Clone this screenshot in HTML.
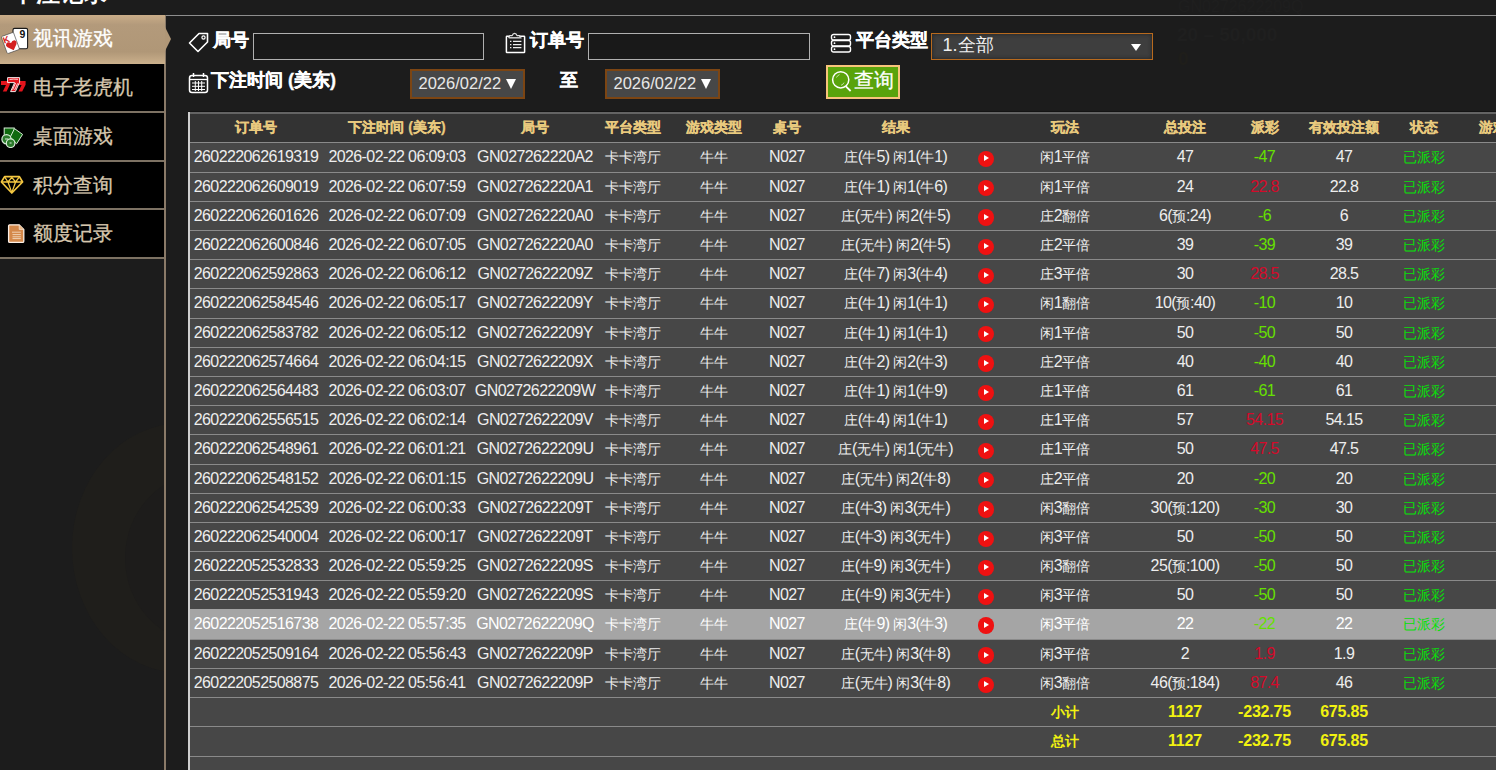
<!DOCTYPE html>
<html><head><meta charset="utf-8">
<style>
html,body{margin:0;padding:0;}
body{width:1496px;height:770px;overflow:hidden;background:#1c1c1c;position:relative;font-family:"Liberation Sans",sans-serif;color:#fff;}
.title{position:absolute;left:11.5px;top:-23px;font-size:24px;font-weight:bold;color:#fff;letter-spacing:0px;}
.topline{position:absolute;left:165px;right:0;top:15px;height:1px;background:#8e8e8e;}
.side{position:absolute;left:0;top:15px;width:165px;}
.vline{position:absolute;left:164px;top:15px;width:1.5px;height:770px;background:#8a7a68;}
.it{position:absolute;left:0;width:164px;height:48px;background:#000;}
.it span{position:absolute;left:33px;top:11px;font-size:20px;color:#d6c7ae;line-height:24px;-webkit-text-stroke:0.3px #d6c7ae;}
.sep{position:absolute;left:0;width:164px;height:2px;background:#7d7263;}
.sel{position:absolute;left:0;top:15px;width:165px;height:49px;background:linear-gradient(to bottom,#c9ac88 0%,#b39a7b 20%,#b09777 75%,#cbb08c 100%);}
.sel:after{content:"";position:absolute;left:165px;top:12px;border-left:6px solid #b09777;border-top:12.5px solid transparent;border-bottom:12.5px solid transparent;}
.sel span{position:absolute;left:33px;top:11px;font-size:20px;color:#fff;line-height:24px;-webkit-text-stroke:0.3px #fff;}
.lab{position:absolute;font-size:18px;font-weight:bold;color:#fff;line-height:20px;-webkit-text-stroke:0.35px #fff;}
.inp{position:absolute;box-sizing:border-box;border:1.5px solid #b0b0b0;background:#191919;}
.sel2{position:absolute;box-sizing:border-box;border:1.5px solid #b86a1e;background:#3e3e3e;box-shadow:inset 0 0 4px #222;}
.date{position:absolute;box-sizing:border-box;border:2.5px solid #7c4513;background:#474747;font-size:16px;color:#e8e8e8;line-height:24px;}
.btn{position:absolute;box-sizing:border-box;border:2px solid #f8c47a;background:#59a30b;}
.tbl{position:absolute;left:188px;top:113px;width:1400px;height:700px;background:#474747;}
.lb{position:absolute;left:188px;top:112px;width:2px;height:700px;background:#cfcfcf;z-index:3;}
.hd{position:absolute;left:188px;width:1400px;height:30.4px;background:#333;border-top:2px solid #646464;box-sizing:border-box;box-shadow:0 -1px 0 #141414;}
.r{position:absolute;left:188px;width:1400px;height:29.2px;border-top:1px solid #8a8a8a;box-sizing:border-box;}
.r.hl .c{color:#fff;}
.r.hl .neg{color:#66e000;}
.r.hl .stc{color:#08e008;}
.r.hl{background:#a5a5a5;border-top-color:#a5a5a5;height:30.3px;z-index:2;}
.c{position:absolute;width:200px;text-align:center;font-style:normal;white-space:nowrap;}
.hd .c{top:4px;font-size:14px;font-weight:bold;color:#e9ca7e;line-height:18px;-webkit-text-stroke:0.25px #e9ca7e;}
.r .c{top:5px;font-size:16px;letter-spacing:-0.6px;color:#eee;line-height:18px;}
.c em{font-style:normal;}
.r em{font-size:14px;letter-spacing:0;}
.r .neg{color:#66e000;}
.r .pos{color:#d40a2a;}
.r .stc{color:#08e008;}
.sum .c{color:#f2f210;font-weight:bold;letter-spacing:-0.2px;}
.pl{position:absolute;top:7.5px;width:16.4px;height:16.4px;border-radius:50%;background:#ef1111;}
.pl:after{content:"";position:absolute;left:6px;top:4.6px;border-left:5.6px solid #fff;border-top:3.5px solid transparent;border-bottom:3.5px solid transparent;}
</style></head><body>
<!-- ghost background -->
<div style="position:absolute;left:0;top:258px;width:164px;height:512px;overflow:hidden">
  <div style="position:absolute;left:72px;top:165px;width:220px;height:250px;border-radius:50%;background:#1f1e1b"></div><div style="position:absolute;left:125px;top:215px;width:160px;height:170px;border-radius:50%;background:#1d1c1b"></div>
</div>
<div style="position:absolute;left:1178px;top:-2px;font-size:16px;color:#1f1f1f;">GN0272622209Q</div>
<div style="position:absolute;left:1177px;top:24px;font-size:19px;color:#1f1f1f;font-weight:bold">20 – 50,000</div>
<div style="position:absolute;left:1178px;top:48px;font-size:19px;color:#1f1e1a;font-weight:bold">0</div>
<div class="title">下注记录</div>
<div class="topline"></div>

<!-- sidebar -->
<div class="vline"></div>
<div class="it" style="top:64px"><span>电子老虎机</span></div>
<div class="sep" style="top:110.5px"></div>
<div class="it" style="top:112.5px"><span>桌面游戏</span></div>
<div class="sep" style="top:159.5px"></div>
<div class="it" style="top:161.5px"><span>积分查询</span></div>
<div class="sep" style="top:208px"></div>
<div class="it" style="top:210px"><span>额度记录</span></div>
<div class="sep" style="top:257px"></div>
<div class="sel"><span>视讯游戏</span></div>

<!-- sidebar icons -->
<svg style="position:absolute;left:0;top:26px" width="30" height="30" viewBox="0 26 30 30">
  <rect x="13" y="28.4" width="14.6" height="20.3" rx="1.5" fill="#fff" stroke="#1a1a1a" stroke-width="1.1"/>
  <text x="19.4" y="37.9" font-size="10.5" font-weight="bold" fill="#111" font-family="Liberation Sans">9</text>
  <g transform="rotate(-20 10.4 43)">
    <rect x="3.9" y="33.9" width="13" height="18.2" rx="1.3" fill="#fff" stroke="#444" stroke-width="0.6"/>
    <text x="4.3" y="41.6" font-size="9" font-weight="bold" fill="#d42020" font-family="Liberation Sans">K</text>
    <path d="M11 51 L6.2 46 Q4.6 43.8 6.2 42.2 Q8.8 40.6 11 43.2 Q13.2 40.6 15.8 42.2 Q17.4 43.8 15.8 46 Z" fill="#d42020"/>
  </g>
</svg>
<svg style="position:absolute;left:0;top:76px" width="28" height="18" viewBox="0 76 28 18">
  <path d="M1 81 L9.8 81 L9.8 84.8 L6.6 91.6 L2.8 91.6 L6 85 L1 85 Z" fill="#e3141c"/>
  <path d="M16.5 81 L25.6 81 L25.6 84.8 L22.2 91.6 L18.4 91.6 L21.6 85 L16.5 85 Z" fill="#e3141c"/>
  <path d="M7.6 77.6 L19.6 77.6 L19.6 82.2 L15.4 91.6 L10.6 91.6 L14.6 82.6 L7.6 82.6 Z" fill="#e3141c" stroke="#fff" stroke-width="0.9"/>
  <path d="M9.5 79.5 Q13.5 78.8 18 79.3 M12.6 89.8 L15.6 83 M14.6 90 L17.6 83.4" stroke="#fff" stroke-width="0.8" fill="none"/>
</svg>
<svg style="position:absolute;left:0;top:126px" width="26" height="22" viewBox="0 126 26 22">
  <rect x="4.2" y="128" width="10" height="10" fill="#0f6a0f" stroke="#d8ecd8" stroke-width="1"/>
  <path d="M14.5 128.6 L22.6 134.4 L16.6 143.8 L10 137.6 Z" fill="#0f6a0f" stroke="#d8ecd8" stroke-width="1" stroke-linejoin="round"/>
  <circle cx="6.5" cy="139.2" r="4.6" fill="#2b7a2b" stroke="#d8ecd8" stroke-width="1.2"/>
  <circle cx="10.6" cy="143.2" r="4.3" fill="#2b7a2b" stroke="#d8ecd8" stroke-width="1.2"/>
  <path d="M5 139 h3 M9.6 143 h2" stroke="#d8ecd8" stroke-width="1"/>
</svg>
<svg style="position:absolute;left:0;top:174px" width="26" height="22" viewBox="0 174 26 22">
  <path d="M4.6 176.6 L19.4 176.6 L22.6 182 L11.8 193 L1.4 182 Z" fill="none" stroke="#f5c842" stroke-width="1.7" stroke-linejoin="round"/>
  <path d="M1.6 182 L22.4 182 M4.6 176.8 L8 182 L11.8 177.4 L15.6 182 L19.4 176.8 M8 182 L11.8 192.6 L15.6 182" fill="none" stroke="#f5c842" stroke-width="1.3" stroke-linejoin="round"/>
</svg>
<svg style="position:absolute;left:7px;top:223px" width="20" height="22" viewBox="7 223 20 22">
  <path d="M9.6 224.8 L19.2 224.8 L23.8 229.4 L23.8 241.2 Q23.8 242.4 22.6 242.4 L9.6 242.4 Q8.6 242.4 8.6 241.2 L8.6 225.8 Q8.6 224.8 9.6 224.8 Z" fill="#d4884a" stroke="#fbefe6" stroke-width="1.3"/>
  <path d="M19.2 224.8 L19.2 229.4 L23.8 229.4" fill="#e9b888" stroke="#fbefe6" stroke-width="0.6"/>
  <path d="M12 232.2 H20.8 M12.5 234.6 H20.8 M12.5 236.8 H20.8 M12.5 238.6 H20.8" stroke="#f3d9c0" stroke-width="0.9"/>
</svg>
<!-- top filter -->
<svg style="position:absolute;left:188px;top:32px" width="21" height="21" viewBox="0 0 21 21">
  <path d="M1.5 11 L11 1.5 L19.5 1.5 L19.5 10 L10 19.5 Z" fill="none" stroke="#fff" stroke-width="1.6" stroke-linejoin="round"/>
  <circle cx="15.5" cy="5.5" r="1.6" fill="none" stroke="#fff" stroke-width="1.2"/>
</svg>
<div class="lab" style="left:213px;top:30px">局号</div>
<div class="inp" style="left:253px;top:33px;width:231px;height:27px"></div>

<svg style="position:absolute;left:503px;top:30px" width="26" height="26" viewBox="503 30 26 26">
  <path d="M509.6 36.2 H507 Q506.4 36.2 506.4 36.8 V52 Q506.4 52.6 507 52.6 H524 Q524.6 52.6 524.6 52 V36.8 Q524.6 36.2 524 36.2 H519.4" fill="none" stroke="#fff" stroke-width="1.5"/>
  <path d="M508.8 37.6 L509.6 35.6 H512.2 Q512.8 33.4 514.6 33.4 Q516.4 33.4 517 35.6 H519.6 L520.6 37.6 Z" fill="none" stroke="#ddd" stroke-width="1.2" stroke-linejoin="round"/>
  <path d="M509.2 38 H521.8" stroke="#aaa" stroke-width="1"/>
  <path d="M513 41.4 H521.4 M513 44.6 H521.4 M513 47.6 H521.4" stroke="#eee" stroke-width="1.2"/>
  <path d="M510 41.4 H511.4 M510 44.6 H511.4 M510 47.6 H511.4" stroke="#eee" stroke-width="1.2"/>
</svg>
<div class="lab" style="left:530px;top:30px">订单号</div>
<div class="inp" style="left:588px;top:33px;width:222px;height:27px"></div>

<svg style="position:absolute;left:830px;top:33px" width="22" height="21" viewBox="0 0 22 21">
  <rect x="1.5" y="1.5" width="19" height="5.5" rx="2" fill="none" stroke="#fff" stroke-width="1.4"/>
  <rect x="1.5" y="7.5" width="19" height="5.5" rx="2" fill="none" stroke="#fff" stroke-width="1.4"/>
  <rect x="1.5" y="13.5" width="19" height="5.5" rx="2" fill="none" stroke="#fff" stroke-width="1.4"/>
  <circle cx="4.5" cy="4.2" r="0.9" fill="#fff"/><circle cx="4.5" cy="10.2" r="0.9" fill="#fff"/><circle cx="4.5" cy="16.2" r="0.9" fill="#fff"/>
</svg>
<div class="lab" style="left:856px;top:30px">平台类型</div>
<div class="sel2" style="left:931px;top:33px;width:222px;height:27px">
  <span style="position:absolute;left:10.5px;top:0.5px;font-size:18px;color:#f0f0f0;line-height:20px">1.全部</span>
  <span style="position:absolute;left:199px;top:10px;border-top:7px solid #fff;border-left:5.5px solid transparent;border-right:5.5px solid transparent;"></span>
</div>

<svg style="position:absolute;left:188px;top:72px" width="21" height="22" viewBox="0 0 21 22">
  <rect x="1.5" y="3.5" width="18" height="17" rx="2.5" fill="none" stroke="#fff" stroke-width="1.5"/>
  <path d="M1.5 7.5 H19.5" stroke="#fff" stroke-width="1.3"/>
  <path d="M5.5 1 V5 M15.5 1 V5" stroke="#fff" stroke-width="1.5"/>
  <path d="M4 11 H17 M4 14.3 H17 M4 17.5 H17 M7.3 9 V19 M10.5 9 V19 M13.7 9 V19" stroke="#fff" stroke-width="1"/>
</svg>
<div class="lab" style="left:211px;top:70px">下注时间 (美东)</div>
<div class="date" style="left:410px;top:69px;width:115px;height:30px"><span style="position:absolute;left:6.5px;top:-0.5px;font-size:16.5px">2026/02/22</span><span style="position:absolute;left:93.5px;top:7.5px;border-top:10.5px solid #fff;border-left:5.3px solid transparent;border-right:5.3px solid transparent;"></span></div>
<div class="lab" style="left:560px;top:70px">至</div>
<div class="date" style="left:605px;top:69px;width:115px;height:30px"><span style="position:absolute;left:6.5px;top:-0.5px;font-size:16.5px">2026/02/22</span><span style="position:absolute;left:93.5px;top:7.5px;border-top:10.5px solid #fff;border-left:5.3px solid transparent;border-right:5.3px solid transparent;"></span></div>
<div class="btn" style="left:826px;top:65px;width:74px;height:34px">
  <svg style="position:absolute;left:-4px;top:-4px" width="30" height="30" viewBox="824 63 30 30">
    <circle cx="840.7" cy="79.8" r="8.1" fill="none" stroke="#fff" stroke-width="1.5"/>
    <path d="M845.6 86.2 L850.6 91" stroke="#fff" stroke-width="1.8"/>
    <path d="M836.5 77.5 Q837.5 75.2 839.6 74.6 M844 82.6 Q843.2 84.6 841 85.3" stroke="#d8f0c8" stroke-width="0.8" fill="none"/>
  </svg>
  <span style="position:absolute;left:26px;top:1px;font-size:20px;color:#fff;line-height:24px;-webkit-text-stroke:0.3px #fff">查询</span>
</div>

<!-- table -->
<div class="tbl"></div>
<div class="hd" style="top:112px"><i class="c " style="left:-32px"><em>订单号</em></i><i class="c " style="left:109px"><em>下注时间</em> (<em>美东</em>)</i><i class="c " style="left:247px"><em>局号</em></i><i class="c " style="left:344.5px"><em>平台类型</em></i><i class="c " style="left:426px"><em>游戏类型</em></i><i class="c " style="left:499px"><em>桌号</em></i><i class="c " style="left:607.5px"><em>结果</em></i><i class="c " style="left:777px"><em>玩法</em></i><i class="c " style="left:897px"><em>总投注</em></i><i class="c " style="left:976.5px"><em>派彩</em></i><i class="c " style="left:1056px"><em>有效投注额</em></i><i class="c " style="left:1136px"><em>状态</em></i><i class="c " style="left:1219px"><em>游戏详情</em></i></div>
<div class="r" style="top:142.4px"><i class="c " style="left:-32px">260222062619319</i><i class="c " style="left:109px">2026-02-22 06:09:03</i><i class="c " style="left:247px">GN027262220A2</i><i class="c " style="left:344.5px"><em>卡卡湾厅</em></i><i class="c " style="left:426px"><em>牛牛</em></i><i class="c " style="left:499px">N027</i><i class="c " style="left:607.5px"><em>庄</em>(<em>牛</em>5) <em>闲</em>1(<em>牛</em>1)</i><b class="pl" style="left:790.0px"></b><i class="c " style="left:777px"><em>闲</em>1<em>平倍</em></i><i class="c " style="left:897px">47</i><i class="c neg" style="left:976.5px">-47</i><i class="c " style="left:1056px">47</i><i class="c stc" style="left:1136px"><em>已派彩</em></i></div>
<div class="r" style="top:171.6px"><i class="c " style="left:-32px">260222062609019</i><i class="c " style="left:109px">2026-02-22 06:07:59</i><i class="c " style="left:247px">GN027262220A1</i><i class="c " style="left:344.5px"><em>卡卡湾厅</em></i><i class="c " style="left:426px"><em>牛牛</em></i><i class="c " style="left:499px">N027</i><i class="c " style="left:607.5px"><em>庄</em>(<em>牛</em>1) <em>闲</em>1(<em>牛</em>6)</i><b class="pl" style="left:790.0px"></b><i class="c " style="left:777px"><em>闲</em>1<em>平倍</em></i><i class="c " style="left:897px">24</i><i class="c pos" style="left:976.5px">22.8</i><i class="c " style="left:1056px">22.8</i><i class="c stc" style="left:1136px"><em>已派彩</em></i></div>
<div class="r" style="top:200.8px"><i class="c " style="left:-32px">260222062601626</i><i class="c " style="left:109px">2026-02-22 06:07:09</i><i class="c " style="left:247px">GN027262220A0</i><i class="c " style="left:344.5px"><em>卡卡湾厅</em></i><i class="c " style="left:426px"><em>牛牛</em></i><i class="c " style="left:499px">N027</i><i class="c " style="left:607.5px"><em>庄</em>(<em>无牛</em>) <em>闲</em>2(<em>牛</em>5)</i><b class="pl" style="left:790.0px"></b><i class="c " style="left:777px"><em>庄</em>2<em>翻倍</em></i><i class="c " style="left:897px">6(<em>预</em>:24)</i><i class="c neg" style="left:976.5px">-6</i><i class="c " style="left:1056px">6</i><i class="c stc" style="left:1136px"><em>已派彩</em></i></div>
<div class="r" style="top:230.0px"><i class="c " style="left:-32px">260222062600846</i><i class="c " style="left:109px">2026-02-22 06:07:05</i><i class="c " style="left:247px">GN027262220A0</i><i class="c " style="left:344.5px"><em>卡卡湾厅</em></i><i class="c " style="left:426px"><em>牛牛</em></i><i class="c " style="left:499px">N027</i><i class="c " style="left:607.5px"><em>庄</em>(<em>无牛</em>) <em>闲</em>2(<em>牛</em>5)</i><b class="pl" style="left:790.0px"></b><i class="c " style="left:777px"><em>庄</em>2<em>平倍</em></i><i class="c " style="left:897px">39</i><i class="c neg" style="left:976.5px">-39</i><i class="c " style="left:1056px">39</i><i class="c stc" style="left:1136px"><em>已派彩</em></i></div>
<div class="r" style="top:259.2px"><i class="c " style="left:-32px">260222062592863</i><i class="c " style="left:109px">2026-02-22 06:06:12</i><i class="c " style="left:247px">GN0272622209Z</i><i class="c " style="left:344.5px"><em>卡卡湾厅</em></i><i class="c " style="left:426px"><em>牛牛</em></i><i class="c " style="left:499px">N027</i><i class="c " style="left:607.5px"><em>庄</em>(<em>牛</em>7) <em>闲</em>3(<em>牛</em>4)</i><b class="pl" style="left:790.0px"></b><i class="c " style="left:777px"><em>庄</em>3<em>平倍</em></i><i class="c " style="left:897px">30</i><i class="c pos" style="left:976.5px">28.5</i><i class="c " style="left:1056px">28.5</i><i class="c stc" style="left:1136px"><em>已派彩</em></i></div>
<div class="r" style="top:288.4px"><i class="c " style="left:-32px">260222062584546</i><i class="c " style="left:109px">2026-02-22 06:05:17</i><i class="c " style="left:247px">GN0272622209Y</i><i class="c " style="left:344.5px"><em>卡卡湾厅</em></i><i class="c " style="left:426px"><em>牛牛</em></i><i class="c " style="left:499px">N027</i><i class="c " style="left:607.5px"><em>庄</em>(<em>牛</em>1) <em>闲</em>1(<em>牛</em>1)</i><b class="pl" style="left:790.0px"></b><i class="c " style="left:777px"><em>闲</em>1<em>翻倍</em></i><i class="c " style="left:897px">10(<em>预</em>:40)</i><i class="c neg" style="left:976.5px">-10</i><i class="c " style="left:1056px">10</i><i class="c stc" style="left:1136px"><em>已派彩</em></i></div>
<div class="r" style="top:317.6px"><i class="c " style="left:-32px">260222062583782</i><i class="c " style="left:109px">2026-02-22 06:05:12</i><i class="c " style="left:247px">GN0272622209Y</i><i class="c " style="left:344.5px"><em>卡卡湾厅</em></i><i class="c " style="left:426px"><em>牛牛</em></i><i class="c " style="left:499px">N027</i><i class="c " style="left:607.5px"><em>庄</em>(<em>牛</em>1) <em>闲</em>1(<em>牛</em>1)</i><b class="pl" style="left:790.0px"></b><i class="c " style="left:777px"><em>闲</em>1<em>平倍</em></i><i class="c " style="left:897px">50</i><i class="c neg" style="left:976.5px">-50</i><i class="c " style="left:1056px">50</i><i class="c stc" style="left:1136px"><em>已派彩</em></i></div>
<div class="r" style="top:346.8px"><i class="c " style="left:-32px">260222062574664</i><i class="c " style="left:109px">2026-02-22 06:04:15</i><i class="c " style="left:247px">GN0272622209X</i><i class="c " style="left:344.5px"><em>卡卡湾厅</em></i><i class="c " style="left:426px"><em>牛牛</em></i><i class="c " style="left:499px">N027</i><i class="c " style="left:607.5px"><em>庄</em>(<em>牛</em>2) <em>闲</em>2(<em>牛</em>3)</i><b class="pl" style="left:790.0px"></b><i class="c " style="left:777px"><em>庄</em>2<em>平倍</em></i><i class="c " style="left:897px">40</i><i class="c neg" style="left:976.5px">-40</i><i class="c " style="left:1056px">40</i><i class="c stc" style="left:1136px"><em>已派彩</em></i></div>
<div class="r" style="top:376.0px"><i class="c " style="left:-32px">260222062564483</i><i class="c " style="left:109px">2026-02-22 06:03:07</i><i class="c " style="left:247px">GN0272622209W</i><i class="c " style="left:344.5px"><em>卡卡湾厅</em></i><i class="c " style="left:426px"><em>牛牛</em></i><i class="c " style="left:499px">N027</i><i class="c " style="left:607.5px"><em>庄</em>(<em>牛</em>1) <em>闲</em>1(<em>牛</em>9)</i><b class="pl" style="left:790.0px"></b><i class="c " style="left:777px"><em>庄</em>1<em>平倍</em></i><i class="c " style="left:897px">61</i><i class="c neg" style="left:976.5px">-61</i><i class="c " style="left:1056px">61</i><i class="c stc" style="left:1136px"><em>已派彩</em></i></div>
<div class="r" style="top:405.2px"><i class="c " style="left:-32px">260222062556515</i><i class="c " style="left:109px">2026-02-22 06:02:14</i><i class="c " style="left:247px">GN0272622209V</i><i class="c " style="left:344.5px"><em>卡卡湾厅</em></i><i class="c " style="left:426px"><em>牛牛</em></i><i class="c " style="left:499px">N027</i><i class="c " style="left:607.5px"><em>庄</em>(<em>牛</em>4) <em>闲</em>1(<em>牛</em>1)</i><b class="pl" style="left:790.0px"></b><i class="c " style="left:777px"><em>庄</em>1<em>平倍</em></i><i class="c " style="left:897px">57</i><i class="c pos" style="left:976.5px">54.15</i><i class="c " style="left:1056px">54.15</i><i class="c stc" style="left:1136px"><em>已派彩</em></i></div>
<div class="r" style="top:434.4px"><i class="c " style="left:-32px">260222062548961</i><i class="c " style="left:109px">2026-02-22 06:01:21</i><i class="c " style="left:247px">GN0272622209U</i><i class="c " style="left:344.5px"><em>卡卡湾厅</em></i><i class="c " style="left:426px"><em>牛牛</em></i><i class="c " style="left:499px">N027</i><i class="c " style="left:607.5px"><em>庄</em>(<em>无牛</em>) <em>闲</em>1(<em>无牛</em>)</i><b class="pl" style="left:790.0px"></b><i class="c " style="left:777px"><em>庄</em>1<em>平倍</em></i><i class="c " style="left:897px">50</i><i class="c pos" style="left:976.5px">47.5</i><i class="c " style="left:1056px">47.5</i><i class="c stc" style="left:1136px"><em>已派彩</em></i></div>
<div class="r" style="top:463.6px"><i class="c " style="left:-32px">260222062548152</i><i class="c " style="left:109px">2026-02-22 06:01:15</i><i class="c " style="left:247px">GN0272622209U</i><i class="c " style="left:344.5px"><em>卡卡湾厅</em></i><i class="c " style="left:426px"><em>牛牛</em></i><i class="c " style="left:499px">N027</i><i class="c " style="left:607.5px"><em>庄</em>(<em>无牛</em>) <em>闲</em>2(<em>牛</em>8)</i><b class="pl" style="left:790.0px"></b><i class="c " style="left:777px"><em>庄</em>2<em>平倍</em></i><i class="c " style="left:897px">20</i><i class="c neg" style="left:976.5px">-20</i><i class="c " style="left:1056px">20</i><i class="c stc" style="left:1136px"><em>已派彩</em></i></div>
<div class="r" style="top:492.8px"><i class="c " style="left:-32px">260222062542539</i><i class="c " style="left:109px">2026-02-22 06:00:33</i><i class="c " style="left:247px">GN0272622209T</i><i class="c " style="left:344.5px"><em>卡卡湾厅</em></i><i class="c " style="left:426px"><em>牛牛</em></i><i class="c " style="left:499px">N027</i><i class="c " style="left:607.5px"><em>庄</em>(<em>牛</em>3) <em>闲</em>3(<em>无牛</em>)</i><b class="pl" style="left:790.0px"></b><i class="c " style="left:777px"><em>闲</em>3<em>翻倍</em></i><i class="c " style="left:897px">30(<em>预</em>:120)</i><i class="c neg" style="left:976.5px">-30</i><i class="c " style="left:1056px">30</i><i class="c stc" style="left:1136px"><em>已派彩</em></i></div>
<div class="r" style="top:522.0px"><i class="c " style="left:-32px">260222062540004</i><i class="c " style="left:109px">2026-02-22 06:00:17</i><i class="c " style="left:247px">GN0272622209T</i><i class="c " style="left:344.5px"><em>卡卡湾厅</em></i><i class="c " style="left:426px"><em>牛牛</em></i><i class="c " style="left:499px">N027</i><i class="c " style="left:607.5px"><em>庄</em>(<em>牛</em>3) <em>闲</em>3(<em>无牛</em>)</i><b class="pl" style="left:790.0px"></b><i class="c " style="left:777px"><em>闲</em>3<em>平倍</em></i><i class="c " style="left:897px">50</i><i class="c neg" style="left:976.5px">-50</i><i class="c " style="left:1056px">50</i><i class="c stc" style="left:1136px"><em>已派彩</em></i></div>
<div class="r" style="top:551.2px"><i class="c " style="left:-32px">260222052532833</i><i class="c " style="left:109px">2026-02-22 05:59:25</i><i class="c " style="left:247px">GN0272622209S</i><i class="c " style="left:344.5px"><em>卡卡湾厅</em></i><i class="c " style="left:426px"><em>牛牛</em></i><i class="c " style="left:499px">N027</i><i class="c " style="left:607.5px"><em>庄</em>(<em>牛</em>9) <em>闲</em>3(<em>无牛</em>)</i><b class="pl" style="left:790.0px"></b><i class="c " style="left:777px"><em>闲</em>3<em>翻倍</em></i><i class="c " style="left:897px">25(<em>预</em>:100)</i><i class="c neg" style="left:976.5px">-50</i><i class="c " style="left:1056px">50</i><i class="c stc" style="left:1136px"><em>已派彩</em></i></div>
<div class="r" style="top:580.4px"><i class="c " style="left:-32px">260222052531943</i><i class="c " style="left:109px">2026-02-22 05:59:20</i><i class="c " style="left:247px">GN0272622209S</i><i class="c " style="left:344.5px"><em>卡卡湾厅</em></i><i class="c " style="left:426px"><em>牛牛</em></i><i class="c " style="left:499px">N027</i><i class="c " style="left:607.5px"><em>庄</em>(<em>牛</em>9) <em>闲</em>3(<em>无牛</em>)</i><b class="pl" style="left:790.0px"></b><i class="c " style="left:777px"><em>闲</em>3<em>平倍</em></i><i class="c " style="left:897px">50</i><i class="c neg" style="left:976.5px">-50</i><i class="c " style="left:1056px">50</i><i class="c stc" style="left:1136px"><em>已派彩</em></i></div>
<div class="r hl" style="top:608.8px"><i class="c " style="left:-32px">260222052516738</i><i class="c " style="left:109px">2026-02-22 05:57:35</i><i class="c " style="left:247px">GN0272622209Q</i><i class="c " style="left:344.5px"><em>卡卡湾厅</em></i><i class="c " style="left:426px"><em>牛牛</em></i><i class="c " style="left:499px">N027</i><i class="c " style="left:607.5px"><em>庄</em>(<em>牛</em>9) <em>闲</em>3(<em>牛</em>3)</i><b class="pl" style="left:790.0px"></b><i class="c " style="left:777px"><em>闲</em>3<em>平倍</em></i><i class="c " style="left:897px">22</i><i class="c neg" style="left:976.5px">-22</i><i class="c " style="left:1056px">22</i><i class="c stc" style="left:1136px"><em>已派彩</em></i></div>
<div class="r" style="top:638.8px"><i class="c " style="left:-32px">260222052509164</i><i class="c " style="left:109px">2026-02-22 05:56:43</i><i class="c " style="left:247px">GN0272622209P</i><i class="c " style="left:344.5px"><em>卡卡湾厅</em></i><i class="c " style="left:426px"><em>牛牛</em></i><i class="c " style="left:499px">N027</i><i class="c " style="left:607.5px"><em>庄</em>(<em>无牛</em>) <em>闲</em>3(<em>牛</em>8)</i><b class="pl" style="left:790.0px"></b><i class="c " style="left:777px"><em>闲</em>3<em>平倍</em></i><i class="c " style="left:897px">2</i><i class="c pos" style="left:976.5px">1.9</i><i class="c " style="left:1056px">1.9</i><i class="c stc" style="left:1136px"><em>已派彩</em></i></div>
<div class="r" style="top:668.0px"><i class="c " style="left:-32px">260222052508875</i><i class="c " style="left:109px">2026-02-22 05:56:41</i><i class="c " style="left:247px">GN0272622209P</i><i class="c " style="left:344.5px"><em>卡卡湾厅</em></i><i class="c " style="left:426px"><em>牛牛</em></i><i class="c " style="left:499px">N027</i><i class="c " style="left:607.5px"><em>庄</em>(<em>无牛</em>) <em>闲</em>3(<em>牛</em>8)</i><b class="pl" style="left:790.0px"></b><i class="c " style="left:777px"><em>闲</em>3<em>翻倍</em></i><i class="c " style="left:897px">46(<em>预</em>:184)</i><i class="c pos" style="left:976.5px">87.4</i><i class="c " style="left:1056px">46</i><i class="c stc" style="left:1136px"><em>已派彩</em></i></div>
<div class="r sum" style="top:697.2px"><i class="c " style="left:777px"><em>小计</em></i><i class="c " style="left:897px">1127</i><i class="c " style="left:976.5px">-232.75</i><i class="c " style="left:1056px">675.85</i></div>
<div class="r sum" style="top:726.4px"><i class="c " style="left:777px"><em>总计</em></i><i class="c " style="left:897px">1127</i><i class="c " style="left:976.5px">-232.75</i><i class="c " style="left:1056px">675.85</i></div>
<div class="r" style="top:755.6px"></div>
<div class="lb"></div>
</body></html>
